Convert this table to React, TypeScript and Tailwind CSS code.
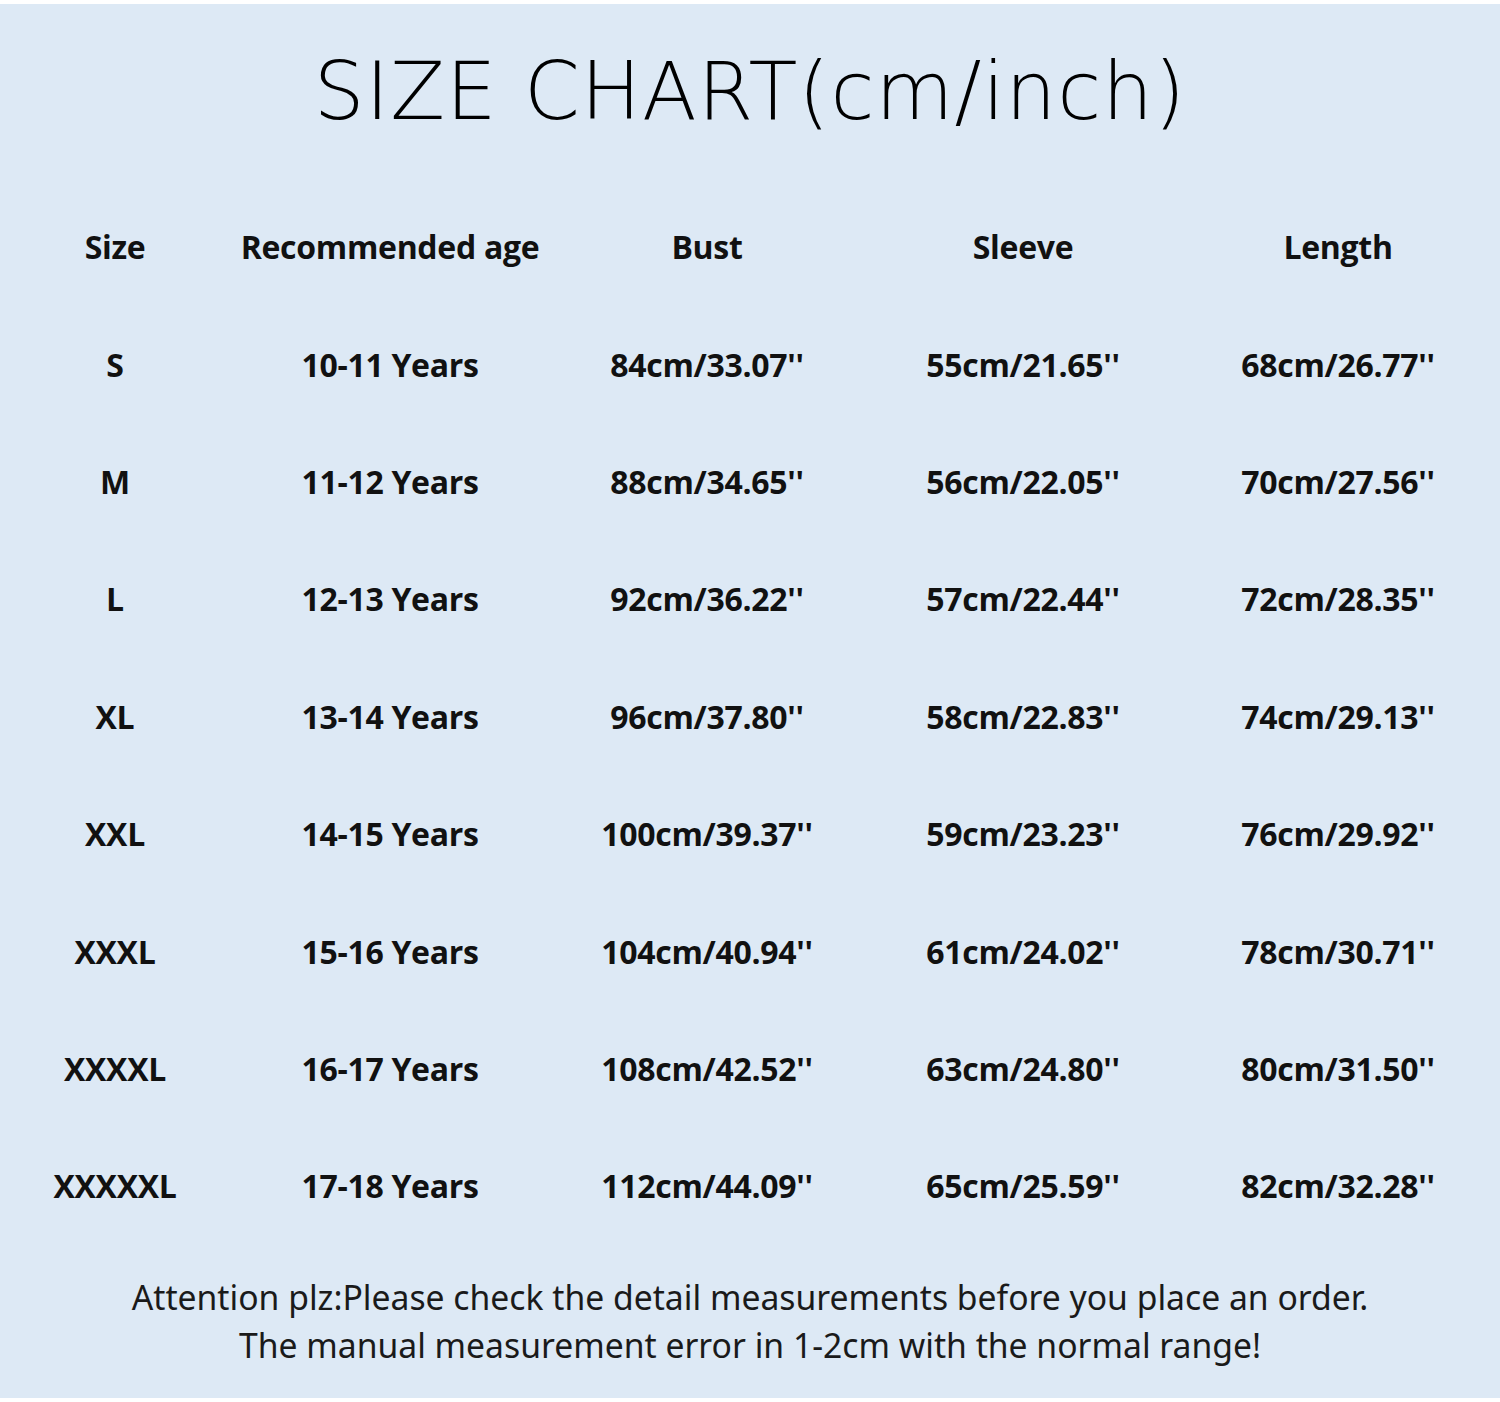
import React from 'react';

type Row = {
  size: string;
  age: string;
  bust: string;
  sleeve: string;
  length: string;
};

const rows: Row[] = [
  { size: 'S', age: '10-11 Years', bust: "84cm/33.07''", sleeve: "55cm/21.65''", length: "68cm/26.77''" },
  { size: 'M', age: '11-12 Years', bust: "88cm/34.65''", sleeve: "56cm/22.05''", length: "70cm/27.56''" },
  { size: 'L', age: '12-13 Years', bust: "92cm/36.22''", sleeve: "57cm/22.44''", length: "72cm/28.35''" },
  { size: 'XL', age: '13-14 Years', bust: "96cm/37.80''", sleeve: "58cm/22.83''", length: "74cm/29.13''" },
  { size: 'XXL', age: '14-15 Years', bust: "100cm/39.37''", sleeve: "59cm/23.23''", length: "76cm/29.92''" },
  { size: 'XXXL', age: '15-16 Years', bust: "104cm/40.94''", sleeve: "61cm/24.02''", length: "78cm/30.71''" },
  { size: 'XXXXL', age: '16-17 Years', bust: "108cm/42.52''", sleeve: "63cm/24.80''", length: "80cm/31.50''" },
  { size: 'XXXXXL', age: '17-18 Years', bust: "112cm/44.09''", sleeve: "65cm/25.59''", length: "82cm/32.28''" }
];

const headers = ['Size', 'Recommended age', 'Bust', 'Sleeve', 'Length'];

const gridCols = 'grid grid-cols-[230px_320px_314px_318px_312px]';

export default function App() {
  return (
    <div className="w-[1500px] h-[1402px] bg-white pt-[4px] pb-[4px]">
      <div className="h-full bg-[#dde9f5] text-[#111] flex flex-col">
        {/* title */}
        <div className="h-[184px] flex items-start justify-center pt-[48px]">
          <h1 className="font-['DejaVu_Sans',sans-serif] font-extralight text-[80px] leading-none tracking-[1px] text-black">
            SIZE CHART(cm/inch)
          </h1>
        </div>

        {/* table */}
        <div className="font-['Open_Sans',sans-serif] font-bold text-[32px] tracking-[-0.3px]">
          <div className={`${gridCols} h-[118px] items-center`}>
            {headers.map((h) => (
              <div key={h} className="text-center">
                {h}
              </div>
            ))}
          </div>
          {rows.map((r) => (
            <div key={r.size} className={`${gridCols} h-[117.4px] items-center`}>
              <div className="text-center">{r.size}</div>
              <div className="text-center">{r.age}</div>
              <div className="text-center">{r.bust}</div>
              <div className="text-center">{r.sleeve}</div>
              <div className="text-center">{r.length}</div>
            </div>
          ))}
        </div>

        {/* note */}
        <div className="mt-[28px] flex flex-col items-center font-['Noto_Sans',sans-serif] text-[33.7px] leading-[48px] text-[#1a1a1a]">
          <span>Attention plz:Please check the detail measurements before you place an order.</span>
          <span>The manual measurement error in 1-2cm with the normal range!</span>
        </div>
      </div>
    </div>
  );
}
